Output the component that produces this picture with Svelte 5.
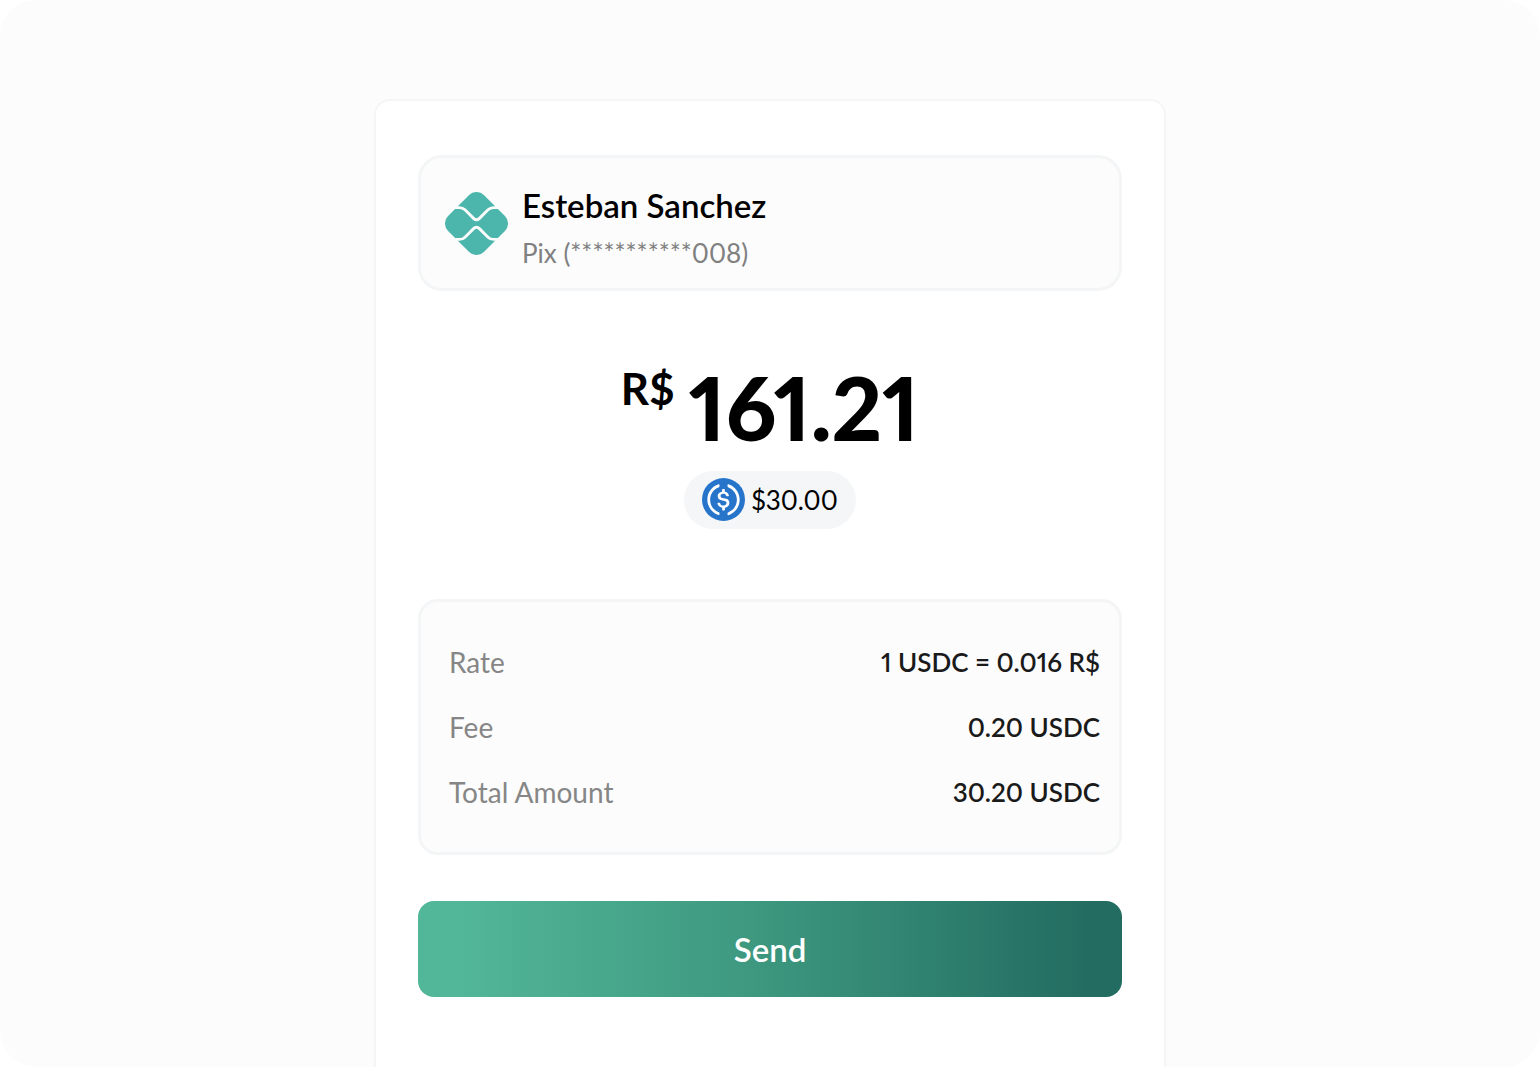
<script>
  const recipient = { name: 'Esteban Sanchez', account: 'Pix (***********008)' };
  const details = [
    { label: 'Rate', value: '1 USDC = 0.016 R$' },
    { label: 'Fee', value: '0.20 USDC' },
    { label: 'Total Amount', value: '30.20 USDC' }
  ];
</script>

<main class="stage">
  <section class="card">
    <div class="panel recipient">
      <svg class="pix" viewBox="0 0 64 64" aria-hidden="true">
        <path
          fill="#4db6ac"
          d="M24.5 3.1a10.6 10.6 0 0 1 15 0L60.9 24.5a10.6 10.6 0 0 1 0 15L39.5 60.9a10.6 10.6 0 0 1-15 0L3.1 39.5a10.6 10.6 0 0 1 0-15Z"
        />
        <path
          fill="none"
          stroke="#fcfcfc"
          stroke-width="2.9"
          d="M8 15.8H14.500Q18 15.800 20.300 18.100L29 26.800Q32 29.800 35 26.800L43.700 18.100Q46 15.800 49.500 15.800H56M8 48.200H14.500Q18 48.200 20.300 45.900L29 37.200Q32 34.200 35 37.200L43.700 45.900Q46 48.200 49.500 48.200H56"
        />
      </svg>
      <div class="who">
        <h1>{recipient.name}</h1>
        <p>{recipient.account}</p>
      </div>
    </div>

    <div class="amount">
      <span class="currency">R$</span>
      <strong>161.21</strong>
    </div>

    <div class="pill">
      <svg class="usdc" viewBox="0 0 2000 2000" aria-hidden="true">
        <circle cx="1000" cy="1000" r="1000" fill="#2775ca" />
        <path
          fill="#fff"
          d="M1275 1158.330c0-145.830-87.500-195.830-262.500-216.660-125-16.670-150-50-150-108.340s41.670-95.830 125-95.830c75 0 116.670 25 137.500 87.500 4.170 12.500 16.670 20.830 29.170 20.830h66.660c16.670 0 29.170-12.500 29.170-29.160v-4.170c-16.670-91.670-91.670-162.500-187.500-170.830v-100c0-16.670-12.500-29.170-33.330-33.340h-62.500c-16.670 0-29.170 12.500-33.340 33.340v95.830c-125 16.670-204.160 100-204.160 204.170 0 137.500 83.330 191.660 258.330 212.500 116.670 20.830 154.170 45.830 154.170 112.500s-58.340 112.500-137.500 112.500c-108.340 0-145.840-45.840-158.340-108.340-4.160-16.660-16.660-25-29.160-25h-70.840c-16.660 0-29.160 12.500-29.160 29.170v4.170c16.660 104.160 83.330 179.160 220.830 200v100c0 16.660 12.500 29.160 33.330 33.330h62.500c16.670 0 29.170-12.500 33.340-33.330v-100c125-20.840 208.330-108.340 208.330-220.840z"
        />
        <path
          fill="#fff"
          d="M787.500 1595.830c-325-116.660-491.670-479.160-370.830-800 62.500-175 200-308.330 370.830-370.830 16.670-8.330 25-20.830 25-41.670V325c0-16.670-8.330-29.170-25-33.330-4.170 0-12.500 0-16.670 4.160-395.830 125-612.500 545.840-487.500 941.670 75 233.330 254.170 412.500 487.500 487.500 16.670 8.330 33.340 0 37.500-16.670 4.170-4.160 4.170-8.330 4.170-16.660v-58.340c0-12.500-12.500-29.160-25-37.500zM1229.170 295.830c-16.670-8.330-33.340 0-37.500 16.670-4.170 4.170-4.170 8.330-4.170 16.670v58.330c0 16.670 12.500 33.330 25 41.670 325 116.660 491.670 479.160 370.830 800-62.500 175-200 308.330-370.830 370.830-16.670 8.330-25 20.830-25 41.670V1700c0 16.670 8.330 29.170 25 33.330 4.170 0 12.500 0 16.670-4.160 395.830-125 612.500-545.840 487.500-941.670-75-237.500-258.340-416.670-487.500-491.670z"
        />
      </svg>
      <span>$30.00</span>
    </div>

    <dl class="panel details">
      {#each details as row}
        <div class="row">
          <dt>{row.label}</dt>
          <dd>{row.value}</dd>
        </div>
      {/each}
    </dl>

    <button type="button" class="send">Send</button>
  </section>
</main>

<style>
  :global(body) {
    background: #fff;
  }

  .stage {
    box-sizing: border-box;
    min-height: 100vh;
    padding: 99px 24px 0;
    display: flex;
    justify-content: center;
    border-radius: 36px;
    background: #fcfcfc;
    font-family: Lato, 'Liberation Sans', sans-serif;
    font-variant-numeric: proportional-nums;
    color: #000;
  }

  .card {
    box-sizing: border-box;
    width: 100%;
    max-width: 792px;
    padding: 54px 42px 68px;
    display: flex;
    flex-direction: column;
    border: 2px solid #f4f5f6;
    border-bottom: 0;
    border-radius: 16px 16px 0 0;
    background: #fff;
  }

  .panel {
    margin: 0;
    border: 3px solid #f4f5f6;
    border-radius: 24px;
    background: #fcfcfc;
  }

  .recipient {
    display: flex;
    align-items: center;
    gap: 14px;
    padding: 11px 24px;
  }

  .pix {
    width: 63px;
    height: 63px;
    flex: none;
  }

  .who {
    padding-top: 12px;
  }

  h1,
  p {
    margin: 0;
    line-height: 48px;
  }

  h1 {
    font-size: 33px;
    font-weight: 600;
  }

  p {
    font-size: 26px;
    color: #808080;
  }

  .amount {
    margin-top: 70px;
    display: flex;
    justify-content: center;
    gap: 14px;
  }

  .currency {
    font-size: 44px;
    font-weight: 700;
    line-height: 54px;
  }

  .amount strong {
    font-size: 88px;
    font-weight: 900;
    line-height: 92px;
  }

  .pill {
    align-self: center;
    margin-top: 18px;
    padding: 7px 18px 8px;
    display: flex;
    align-items: center;
    gap: 6px;
    border-radius: 30px;
    background: #f5f6f8;
    font-size: 26px;
  }

  .usdc {
    width: 43px;
    height: 43px;
  }

  .details {
    margin-top: 70px;
    padding: 28px 19px 27px 28px;
    border-radius: 20px;
  }

  .row {
    display: flex;
    justify-content: space-between;
    font-size: 28px;
    line-height: 65px;
  }

  dt {
    color: #868686;
  }

  dd {
    margin: 0;
    font-size: 26px;
    font-weight: 600;
    color: #1a1a1a;
  }

  .send {
    margin-top: 46px;
    height: 96px;
    border: 0;
    border-radius: 16px;
    background: linear-gradient(90deg, #52b698 6%, #3d987f 48%, #236c61 95%);
    color: #fff;
    font-family: inherit;
    font-size: 33px;
    font-weight: 600;
    cursor: pointer;
  }
</style>
